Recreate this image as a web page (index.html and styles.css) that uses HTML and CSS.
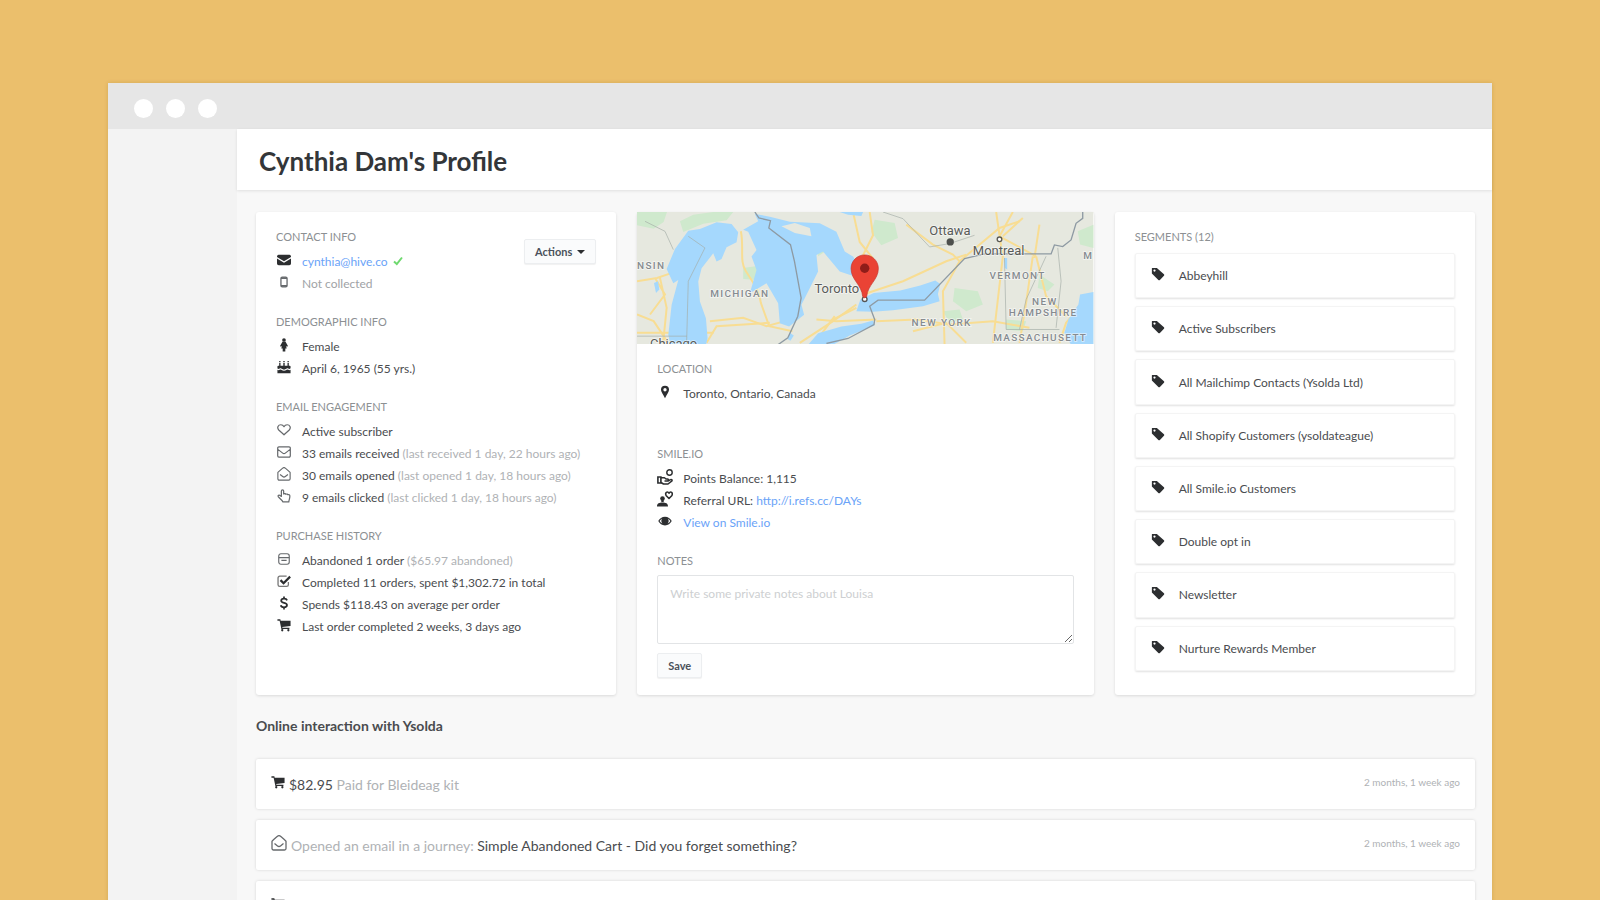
FILE: index.html
```html
<!DOCTYPE html>
<html lang="en">

<head>
    <meta charset="UTF-8">
    <meta name="viewport" content="width=device-width, initial-scale=1.0">
    <title>Cynthia Dam's Profile</title>
    <link rel="stylesheet" href="styles.css">
</head>

<body>
    <!-- Icon sprite -->
    <svg class="sprite" aria-hidden="true">
        <symbol id="i-mail" viewBox="0 0 16 16">
            <path fill="currentColor" d="M2 2h12a2 2 0 0 1 2 2v.6L8 9.4 0 4.600V4a2 2 0 0 1 2-2zM0 6.400l8 4.800 8-4.800V12a2 2 0 0 1-2 2H2a2 2 0 0 1-2-2z"/>
        </symbol>
        <symbol id="i-phone" viewBox="0 0 16 16">
            <rect x="4.500" y="2.500" width="7" height="11" rx="1.500" fill="none" stroke="currentColor" stroke-width="1.500"/>
            <path fill="currentColor" d="M4.500 2.500h7v2h-7zM4.500 11.500h7v2h-7z"/>
        </symbol>
        <symbol id="i-female" viewBox="0 0 16 16">
            <circle cx="8" cy="2.300" r="2.100" fill="currentColor"/>
            <path fill="currentColor" d="M6.200 4.300h3.600l2.700 4.700-1 1-1.200-1 .8 3H9.500V15.500h-3V12H4.900l.8-3-1.200 1-1-1z"/>
        </symbol>
        <symbol id="i-cake" viewBox="0 0 16 16">
            <path fill="currentColor" d="M2.500 3h1.500v4H2.500zM7.200 3h1.600v4H7.200zM12 3h1.500v4H12zM2.500 1h1.500v1.300H2.500zM7.200 1h1.600v1.300H7.200zM12 1h1.500v1.300H12zM1.500 6.500h13a1 1 0 0 1 1 1v2c-1.500 1.600-2.800 0-3.700 0s-2 1.500-3.800 1.500S5.200 9.500 4.200 9.500 2 11 .5 9.700V7.500a1 1 0 0 1 1-1zM.5 11.200c1.500 1 2.800-.3 3.700-.3s2 1.500 3.800 1.500 2.800-1.500 3.800-1.500 2.200 1.300 3.700.3V15H.5z"/>
        </symbol>
        <symbol id="i-heart" viewBox="0 0 16 16">
            <path fill="none" stroke="currentColor" stroke-width="1.400" stroke-linejoin="round" d="M8 13.500 2 8C-.5 5 1.500 2 4.300 2 6 2 7.400 3 8 4.200 8.600 3 10 2 11.700 2c2.800 0 4.800 3 2.300 6z"/>
        </symbol>
        <symbol id="i-envelope" viewBox="0 0 16 16">
            <path fill="none" stroke="currentColor" stroke-width="1.400" stroke-linejoin="round" d="M2.200 2.200h11.600a1.400 1.400 0 0 1 1.400 1.400v8.800a1.400 1.400 0 0 1-1.400 1.400H2.200A1.400 1.400 0 0 1 .8 12.400V3.600a1.400 1.400 0 0 1 1.400-1.400zM1 5l5.500 4.300a2.400 2.400 0 0 0 3 0L15 5"/>
        </symbol>
        <symbol id="i-open" viewBox="0 0 16 16">
            <path fill="none" stroke="currentColor" stroke-width="1.300" stroke-linejoin="round" d="M1 6.200C3 4.300 5 2.600 6.500 1.300a2.300 2.300 0 0 1 3 0C11 2.600 13 4.300 15 6.200v7.300A1.500 1.500 0 0 1 13.500 15h-11A1.500 1.500 0 0 1 1 13.500zM3.500 8.500l3 2.400a2.400 2.400 0 0 0 3 0l3-2.400"/>
        </symbol>
        <symbol id="i-pointer" viewBox="0 0 16 16">
            <path fill="none" stroke="currentColor" stroke-width="1.400" stroke-linejoin="round" d="M5 8.500V2.200a1.300 1.300 0 0 1 2.600 0v3.500c1-.8 2.100-.5 2.500.3 1-.6 2-.2 2.300.5 1.300-.4 2.300.3 2.300 1.600 0 3-1 4-1.200 6.700H6.800C6 12.600 3.500 11.300 1.600 9c-1-1.500.8-2.600 1.900-1.600z"/>
        </symbol>
        <symbol id="i-minus" viewBox="0 0 16 16">
            <rect x="2" y="2" width="12" height="12" rx="2.500" fill="none" stroke="currentColor" stroke-width="1.300"/>
            <path stroke="currentColor" stroke-width="1.300" d="M2 6.500h12M5 9.500h6"/>
        </symbol>
        <symbol id="i-check-box" viewBox="0 0 16 16">
            <path fill="none" stroke="#777" stroke-width="1.500" d="M13 9v3.200a2 2 0 0 1-2 2H3.200a2 2 0 0 1-2-2V4.500a2 2 0 0 1 2-2H11"/>
            <path fill="none" stroke="currentColor" stroke-width="2.600" d="M4 7l3.500 3.500L15 3"/>
        </symbol>
        <symbol id="i-dollar" viewBox="0 0 16 16">
            <path fill="none" stroke="currentColor" stroke-width="2" d="M11.500 5c-.5-1.500-1.800-2-3.400-2C6.200 3 4.800 4 4.800 5.500c0 3.300 6.600 1.500 6.600 4.800 0 1.600-1.400 2.600-3.400 2.600-1.900 0-3.300-.8-3.700-2.400M8 .5V3M8 13v2.500"/>
        </symbol>
        <symbol id="i-cart" viewBox="0 0 16 16">
            <path fill="currentColor" d="M.5 1.500h3.300l.4 1.500H15.500v6L6 10.200l.2 1h8V12.500H5L3 3H.5z"/>
            <circle cx="6" cy="14" r="1.300" fill="currentColor"/>
            <circle cx="13" cy="14" r="1.300" fill="currentColor"/>
        </symbol>
        <symbol id="i-pin" viewBox="0 0 16 16">
            <path fill="currentColor" fill-rule="evenodd" d="M8 .8a4.600 4.600 0 0 1 4.600 4.600c0 2.200-2.800 6-4.600 9.800-1.800-3.800-4.600-7.600-4.600-9.800A4.600 4.600 0 0 1 8 .8zM8 3.500a1.900 1.900 0 1 0 0 3.800 1.900 1.900 0 0 0 0-3.800z"/>
        </symbol>
        <symbol id="i-points" viewBox="0 0 16 16">
            <circle cx="12.500" cy="3.500" r="2.700" fill="none" stroke="currentColor" stroke-width="1.400"/>
            <path fill="none" stroke="currentColor" stroke-width="1.500" stroke-linejoin="round" d="M4 13.500 6.500 15H11l4-3.200c.4-1-.8-1.500-1.500-1.100L11 12H7.500M4 8.700h3.500L9 10h1.500c1.400 0 1.200 2 0 2"/>
            <path fill="none" stroke="currentColor" stroke-width="1.600" d="M.9 8h3v6H.9z"/>
        </symbol>
        <symbol id="i-referral" viewBox="0 0 16 16">
            <circle cx="5.500" cy="7.500" r="2.300" fill="currentColor"/>
            <path fill="currentColor" d="M4.300 9h2.400v2H4.300zM0 15.500c0-3.500 2.300-3.700 5.500-4 3.200.3 5.500.5 5.500 4z"/>
            <path fill="none" stroke="currentColor" stroke-width="1.600" stroke-linejoin="round" d="M12 7.500 9.300 4.700C8 2.800 9 1 10.300 1c.8 0 1.400.6 1.700 1.200C12.300 1.600 12.900 1 13.700 1 15 1 16 2.800 14.700 4.700z"/>
        </symbol>
        <symbol id="i-eye" viewBox="0 0 16 16">
            <path fill="currentColor" fill-rule="evenodd" d="M8 3c3.500 0 6 2 7.700 5C14 11 11.500 13 8 13S2 11 .3 8C2 5 4.500 3 8 3zM4.800 5.200C3.500 6 2.500 6.900 1.800 8c.8 1.200 1.900 2.200 3.200 2.900a4.600 4.600 0 0 1-.2-5.700zM11.200 5.200a4.600 4.600 0 0 1-.2 5.700c1.300-.7 2.400-1.700 3.200-2.900-.7-1.100-1.700-2-3-2.800z"/>
        </symbol>
        <symbol id="i-tag" viewBox="0 0 16 16">
            <path fill="currentColor" fill-rule="evenodd" d="M1.500 1h5.200L14.800 8.200c.6.600.6 1.200 0 1.800L10.200 14.800c-.6.600-1.200.6-1.800 0L1 7.500V1.500A.5.500 0 0 1 1.500 1zM4 2.800A1.300 1.300 0 1 0 4 5.400 1.300 1.300 0 0 0 4 2.800z"/>
        </symbol>
    </svg>

    <div class="browser">
        <div class="browser-bar">
            <span class="dot"></span>
            <span class="dot"></span>
            <span class="dot"></span>
        </div>

        <div class="app">
            <aside class="sidebar"></aside>

            <main class="main">
                <header class="page-header">
                    <h1>Cynthia Dam's Profile</h1>
                </header>

                <div class="content">
                    <div class="cards">
                        <section class="card card-body">
                            <div class="card-top">
                                <div class="info">
                                    <h2>CONTACT INFO</h2>
                                    <ul class="rows">
                                        <li><svg class="icon"><use href="#i-mail"/></svg><span><a href="mailto:cynthia@hive.co">cynthia@hive.co</a>
                                            <svg class="check" viewBox="0 0 10 10"><path d="M1 5.500 3.800 8 9 1.500"/></svg></span></li>
                                        <li class="muted"><svg class="icon icon-line"><use href="#i-phone"/></svg><span>Not collected</span></li>
                                    </ul>
                                </div>
                                <button type="button" class="btn">Actions <span class="caret"></span></button>
                            </div>

                            <div class="info">
                                <h2>DEMOGRAPHIC INFO</h2>
                                <ul class="rows">
                                    <li><svg class="icon"><use href="#i-female"/></svg><span>Female</span></li>
                                    <li><svg class="icon"><use href="#i-cake"/></svg><span>April 6, 1965 (55 yrs.)</span></li>
                                </ul>
                            </div>

                            <div class="info">
                                <h2>EMAIL ENGAGEMENT</h2>
                                <ul class="rows">
                                    <li><svg class="icon icon-line"><use href="#i-heart"/></svg><span>Active subscriber</span></li>
                                    <li><svg class="icon icon-line"><use href="#i-envelope"/></svg><span>33 emails received <small>(last received 1 day, 22 hours ago)</small></span></li>
                                    <li><svg class="icon icon-line"><use href="#i-open"/></svg><span>30 emails opened <small>(last opened 1 day, 18 hours ago)</small></span></li>
                                    <li><svg class="icon icon-line"><use href="#i-pointer"/></svg><span>9 emails clicked <small>(last clicked 1 day, 18 hours ago)</small></span></li>
                                </ul>
                            </div>

                            <div class="info">
                                <h2>PURCHASE HISTORY</h2>
                                <ul class="rows">
                                    <li><svg class="icon icon-line"><use href="#i-minus"/></svg><span>Abandoned 1 order <small>($65.97 abandoned)</small></span></li>
                                    <li><svg class="icon"><use href="#i-check-box"/></svg><span>Completed 11 orders, spent $1,302.72 in total</span></li>
                                    <li><svg class="icon"><use href="#i-dollar"/></svg><span>Spends $118.43 on average per order</span></li>
                                    <li><svg class="icon"><use href="#i-cart"/></svg><span>Last order completed 2 weeks, 3 days ago</span></li>
                                </ul>
                            </div>
                        </section>

                        <section class="card">
                            <svg class="map" viewBox="21 22 1371 396" role="img" aria-label="Map of Toronto">
                                <rect x="21" y="22" width="1371" height="399" fill="#e6e8df"/>
                                <!-- parks -->
                                <g fill="#cfe9cd">
                                    <path d="M21 22h90l-10 30-30 20-50-10z"/>
                                    <path d="M150 50l40-20 60-8h60l-20 25-70 10-60 25z"/>
                                    <path d="M735 45l60 10 10 45-50 22-30-40z"/>
                                    <path d="M340 190l70-10 20 20-30 28-60-5z"/>
                                    <path d="M975 250l70 10 15 40-50 20-40-30z"/>
                                    <path d="M1230 210l45 30-20 20-30-10z"/>
                                    <path d="M1345 80l47-20v70l-40-10z"/>
                                    <path d="M1130 345l60 5-10 30-50-5z"/>
                                    <path d="M560 110l35 25-30 20z"/>
                                    <path d="M940 320l50-5 10 30-40 10z"/>
                                </g>
                                <!-- roads -->
                                <g fill="none" stroke="#f8dd93" stroke-width="6">
                                    <path d="M333 80c10 50-5 90 15 120s40 60 45 95l25 70 70 15"/>
                                    <path d="M240 350l100-10 70 25 90-25"/>
                                    <path d="M21 230l60-10 45-15M60 330l45-60-30-50M21 330l50 20 40 60M90 220l20 90-10 100"/>
                                    <path d="M670 22l20 90 40 50-15 80M680 300l-70 50-100 65M700 270l120-40 130-60 60-20"/>
                                    <path d="M720 22l10 70-30 60M600 350l80-40M560 345l60 5 120-5"/>
                                    <path d="M830 60l80 60 60 30 20 20 120-100 60-20M990 170l-50 90 5 160M1110 95l40-73M1110 95l110 60M1110 95l10 60-15 130-15 130"/>
                                    <path d="M740 350l120-5 100 15 130-10 110 20M1170 415l20-120 20-140M1290 415l20-60 60-70M1230 60l-15 100M21 385h230M555 415l60-80"/>
                                    <path d="M230 415l30-50 160-10M850 380l100-25 60 60M1100 22l10 70M1180 40l-60 55M1220 155l30 120 60 60"/>
                                </g>
                                <!-- lakes -->
                                <g fill="#a5d8fd">
                                    <path d="M110 193l25-60 40-55 35-5 50-20 45 5 20 25-5 30-30 15-15 35-15 8-10-25-35 45-10 40 5 60 18 50 5 60-15 60H130l-15-70 10-90 20-75-15 10z"/>
                                    <path d="M340 75l45-25-10-22 45 8 60 15 90 5 50 25 25 60 25 15 25 40-20 20-45-15-25-30-25-30-20 10 5 50-25 50-25 50 8 30-45 35-28-10-5-60-35-60-50 30 20-70-15-40 15-20-25-55z"/>
                                    <path d="M630 22h70l-5 12-40-4z"/>
                                    <path d="M680 320l12-35 40-20 80-7 60-15 45-15 15 10-7 30 5 22-50 15-90 12-60 5z"/>
                                    <path d="M535 421l30-35 70-20 60-8 35-10 5 15-75 30-50 28z"/>
                                    <path d="M1392 262l-40 8-5 30-30 45-12 40 20 36h67z"/>
                                    <path d="M72 235l12-5 4 25-10 10z"/>
                                    <path d="M1124 160h9v35l-7-5zM480 385l12 8-10 16-8-5z"/>
                                </g>
                                <path fill="#e6e8df" d="M455 65l40-10 45 15 5 25-50-10z"/>
                                <!-- borders -->
                                <g fill="none" stroke="#8e9aa3" stroke-width="4">
                                    <path d="M375 22l12 18 35 8-5 22 65 50 12 50 20 110-10 55-30 65-30 21"/>
                                    <path d="M590 417l65-15 78-42 2-15-15-40 25-18h140l120-125 60-14h200l10-27 25 5 25-20 15-50 20-15v-42"/>
                                </g>
                                <g fill="none" stroke="#a5ada8" stroke-width="2">
                                    <path d="M45 50l60 30 25 55M175 95l50 35-50 100-5 185M21 395h150M760 22l60 20 80 85 60-10 75-25M1125 160l5 215h160M1285 130l10 100-15 140M1250 155l-60 130-20 90"/>
                                </g>
                                <!-- labels -->
                                <g class="map-state">
                                    <text x="21" y="192">NSIN</text>
                                    <text x="241" y="278">MICHIGAN</text>
                                    <text x="1080" y="222">VERMONT</text>
                                    <text x="1208" y="302">NEW</text>
                                    <text x="1138" y="335">HAMPSHIRE</text>
                                    <text x="846" y="366">NEW YORK</text>
                                    <text x="1091" y="411">MASSACHUSETT</text>
                                    <text x="1362" y="164">M</text>
                                </g>
                                <g class="map-city">
                                    <text x="899" y="92">Ottawa</text>
                                    <text x="1030" y="150">Montreal</text>
                                    <text x="554" y="265">Toronto</text>
                                    <text x="60" y="431">Chicago</text>
                                </g>
                                <circle cx="962" cy="112" r="11" fill="#4d4f4c"/>
                                <circle cx="1110" cy="104" r="7" fill="#fff" stroke="#5b5b55" stroke-width="4"/>
                                <!-- marker -->
                                <circle cx="705" cy="284" r="7" fill="#fff" stroke="#555" stroke-width="4"/>
                                <path fill="#ea4335" stroke="#c5322a" stroke-width="2" d="M705 151c23 0 41 18 41 41 0 34-32 48-35 84q-6 8-12 0c-3-36-35-50-35-84 0-23 18-41 41-41z"/>
                                <circle cx="705" cy="191" r="14" fill="#8f1d19"/>
                            </svg>
                            <div class="card-body">
                                <div class="info info-location">
                                    <h2>LOCATION</h2>
                                    <ul class="rows">
                                        <li><svg class="icon"><use href="#i-pin"/></svg><span>Toronto, Ontario, Canada</span></li>
                                    </ul>
                                </div>

                                <div class="info">
                                    <h2>SMILE.IO</h2>
                                    <ul class="rows">
                                        <li><svg class="icon icon-lg"><use href="#i-points"/></svg><span>Points Balance: 1,115</span></li>
                                        <li><svg class="icon icon-lg"><use href="#i-referral"/></svg><span>Referral URL: <a href="#">http://i.refs.cc/DAYs</a></span></li>
                                        <li><svg class="icon"><use href="#i-eye"/></svg><span><a href="#">View on Smile.io</a></span></li>
                                    </ul>
                                </div>

                                <form class="notes">
                                    <h2><label for="notes">NOTES</label></h2>
                                    <textarea id="notes" placeholder="Write some private notes about Louisa"></textarea>
                                    <button type="button" class="btn">Save</button>
                                </form>
                            </div>
                        </section>

                        <section class="card card-body segments">
                            <h2>SEGMENTS (12)</h2>
                            <ul class="segment-list">
                                <li><svg class="icon"><use href="#i-tag"/></svg>Abbeyhill</li>
                                <li><svg class="icon"><use href="#i-tag"/></svg>Active Subscribers</li>
                                <li><svg class="icon"><use href="#i-tag"/></svg>All Mailchimp Contacts (Ysolda Ltd)</li>
                                <li><svg class="icon"><use href="#i-tag"/></svg>All Shopify Customers (ysoldateague)</li>
                                <li><svg class="icon"><use href="#i-tag"/></svg>All Smile.io Customers</li>
                                <li><svg class="icon"><use href="#i-tag"/></svg>Double opt in</li>
                                <li><svg class="icon"><use href="#i-tag"/></svg>Newsletter</li>
                                <li><svg class="icon"><use href="#i-tag"/></svg>Nurture Rewards Member</li>
                            </ul>
                        </section>
                    </div>

                    <h3>Online interaction with Ysolda</h3>

                    <ul class="feed">
                        <li>
                            <svg class="icon"><use href="#i-cart"/></svg>
                            <p>$82.95 <span>Paid for Bleideag kit</span></p>
                            <time>2 months, 1 week ago</time>
                        </li>
                        <li>
                            <svg class="icon icon-lg icon-line"><use href="#i-open"/></svg>
                            <p><span>Opened an email in a journey:</span> Simple Abandoned Cart - Did you forget something?</p>
                            <time>2 months, 1 week ago</time>
                        </li>
                        <li>
                            <svg class="icon"><use href="#i-cart"/></svg>
                        </li>
                    </ul>
                </div>
            </main>
        </div>
    </div>
</body>

</html>
```

FILE: styles.css
```css
* {
    box-sizing: border-box;
}

body {
    font-family: Lato, "Liberation Sans", sans-serif;
    font-size: 12px;
    line-height: 22px;
    color: #4a4c4f;
    margin: 0;
    padding: 83px 108px 0;
    height: 100vh;
    overflow: hidden;
    background-color: #ebbf6c;
}

h1,
h2,
h3,
p,
ul {
    margin: 0;
    padding: 0;
}

ul {
    list-style: none;
}

a {
    color: #6aa3f8;
    text-decoration: none;
}

.sprite {
    display: none;
}

/* Browser frame */
.browser {
    background-color: #f8f8f8;
    box-shadow: 0 0 4px rgba(120, 80, 0, 0.2);
}

.browser-bar {
    display: flex;
    align-items: center;
    gap: 13px;
    height: 46px;
    padding: 4px 26px 0;
    background-color: #e6e6e6;
}

.dot {
    width: 19px;
    height: 19px;
    border-radius: 50%;
    background-color: #fff;
}

.app {
    display: flex;
}

.sidebar {
    flex: 0 0 129px;
    background-color: #f3f3f3;
}

.main {
    flex: 1;
    min-width: 0;
}

.page-header {
    padding: 17px 22px 14px;
    background-color: #fff;
    box-shadow: 0 1px 3px rgba(0, 0, 0, 0.1);
}

h1 {
    font-size: 26px;
    line-height: 30px;
    font-weight: 700;
    color: #333639;
}

.content {
    padding: 22px 17px 0 19px;
}

/* Cards */
.cards {
    display: grid;
    grid-template-columns: 15fr 19fr 15fr;
    gap: 21px;
}

.card {
    background-color: #fff;
    border-radius: 3px;
    box-shadow: 0 1px 3px rgba(0, 0, 0, 0.12);
}

.card-body {
    padding: 15px 20px;
}

.card-top {
    display: flex;
    justify-content: space-between;
    align-items: flex-start;
}

.card-top .btn {
    margin-top: 12px;
}

h2 {
    margin-bottom: 4px;
    font-size: 11px;
    line-height: 20px;
    font-weight: 400;
    color: #8c9093;
}

.info {
    margin-bottom: 17px;
}

.info-location {
    margin-bottom: 39px;
}

.rows li {
    display: flex;
    align-items: center;
    gap: 11px;
    height: 22px;
    padding-left: 1px;
    white-space: nowrap;
}

.rows .muted {
    color: #a0a3a6;
}

.icon {
    flex: none;
    width: 14px;
    height: 14px;
    margin-bottom: 4px;
    color: #2c2e30;
}

.icon-line {
    color: #66696c;
}

.icon-lg {
    width: 16px;
    height: 16px;
}

.rows .icon-lg {
    margin-left: -1px;
    margin-right: -1px;
}

small {
    font-size: 12px;
    color: #afb2b5;
}

.check {
    width: 10px;
    height: 10px;
    margin-left: 2px;
    fill: none;
    stroke: #6fd96f;
    stroke-width: 2;
}

.btn {
    display: inline-flex;
    align-items: center;
    gap: 5px;
    height: 25px;
    padding: 0 10px;
    font: 700 11px Lato, "Liberation Sans", sans-serif;
    color: #4a515a;
    background-color: #fafbfc;
    border: 1px solid #eceef0;
    border-radius: 2px;
    box-shadow: 0 1px 1px rgba(0, 0, 0, 0.06);
}

.caret {
    border: 4px solid transparent;
    border-top-color: #2c2e30;
    border-bottom: 0;
}

.map {
    display: block;
    width: 100%;
}

.map-state,
.map-city {
    font-family: Roboto, sans-serif;
    paint-order: stroke;
    stroke: rgba(255, 255, 255, 0.6);
    stroke-width: 5px;
}

.map-state {
    font-size: 30px;
    font-weight: 500;
    letter-spacing: 4px;
    fill: #868b90;
}

.map-city {
    font-size: 39px;
    fill: #595b58;
}

.notes .btn {
    margin-bottom: 2px;
}

textarea {
    display: block;
    width: 100%;
    height: 69px;
    margin-bottom: 9px;
    padding: 10px 12px;
    font: 12px/16px Lato, "Liberation Sans", sans-serif;
    border: 1px solid #e2e4e6;
    border-radius: 2px;
    resize: vertical;
}

textarea::placeholder {
    color: #cdcfd1;
}

/* Segments */
.segments {
    display: flex;
    flex-direction: column;
    padding-bottom: 24px;
}

.segments h2 {
    margin-bottom: 6px;
}

.segment-list {
    flex: 1;
    display: grid;
    grid-auto-rows: 1fr;
    gap: 8px;
}

.segment-list li {
    display: flex;
    align-items: center;
    gap: 14px;
    min-height: 44px;
    padding: 1px 15px 0;
    border: 1px solid #f4f4f4;
    border-radius: 2px;
    box-shadow: 0 1px 2px rgba(0, 0, 0, 0.12);
}

/* Activity feed */
h3 {
    margin: 20px 0 22px;
    font-size: 14px;
    line-height: 22px;
    font-weight: 700;
}

.feed {
    display: flex;
    flex-direction: column;
    gap: 11px;
}

.feed li {
    display: flex;
    align-items: center;
    gap: 4px;
    height: 50px;
    padding: 0 15px;
    background-color: #fff;
    border-radius: 2px;
    box-shadow: 0 0 3px rgba(0, 0, 0, 0.15);
}

.feed p {
    flex: 1;
    padding-top: 2px;
    font-size: 14px;
}

.feed p span {
    color: #afb2b5;
}

.feed time {
    margin-bottom: 4px;
    font-size: 10px;
    color: #afb2b5;
}
```
